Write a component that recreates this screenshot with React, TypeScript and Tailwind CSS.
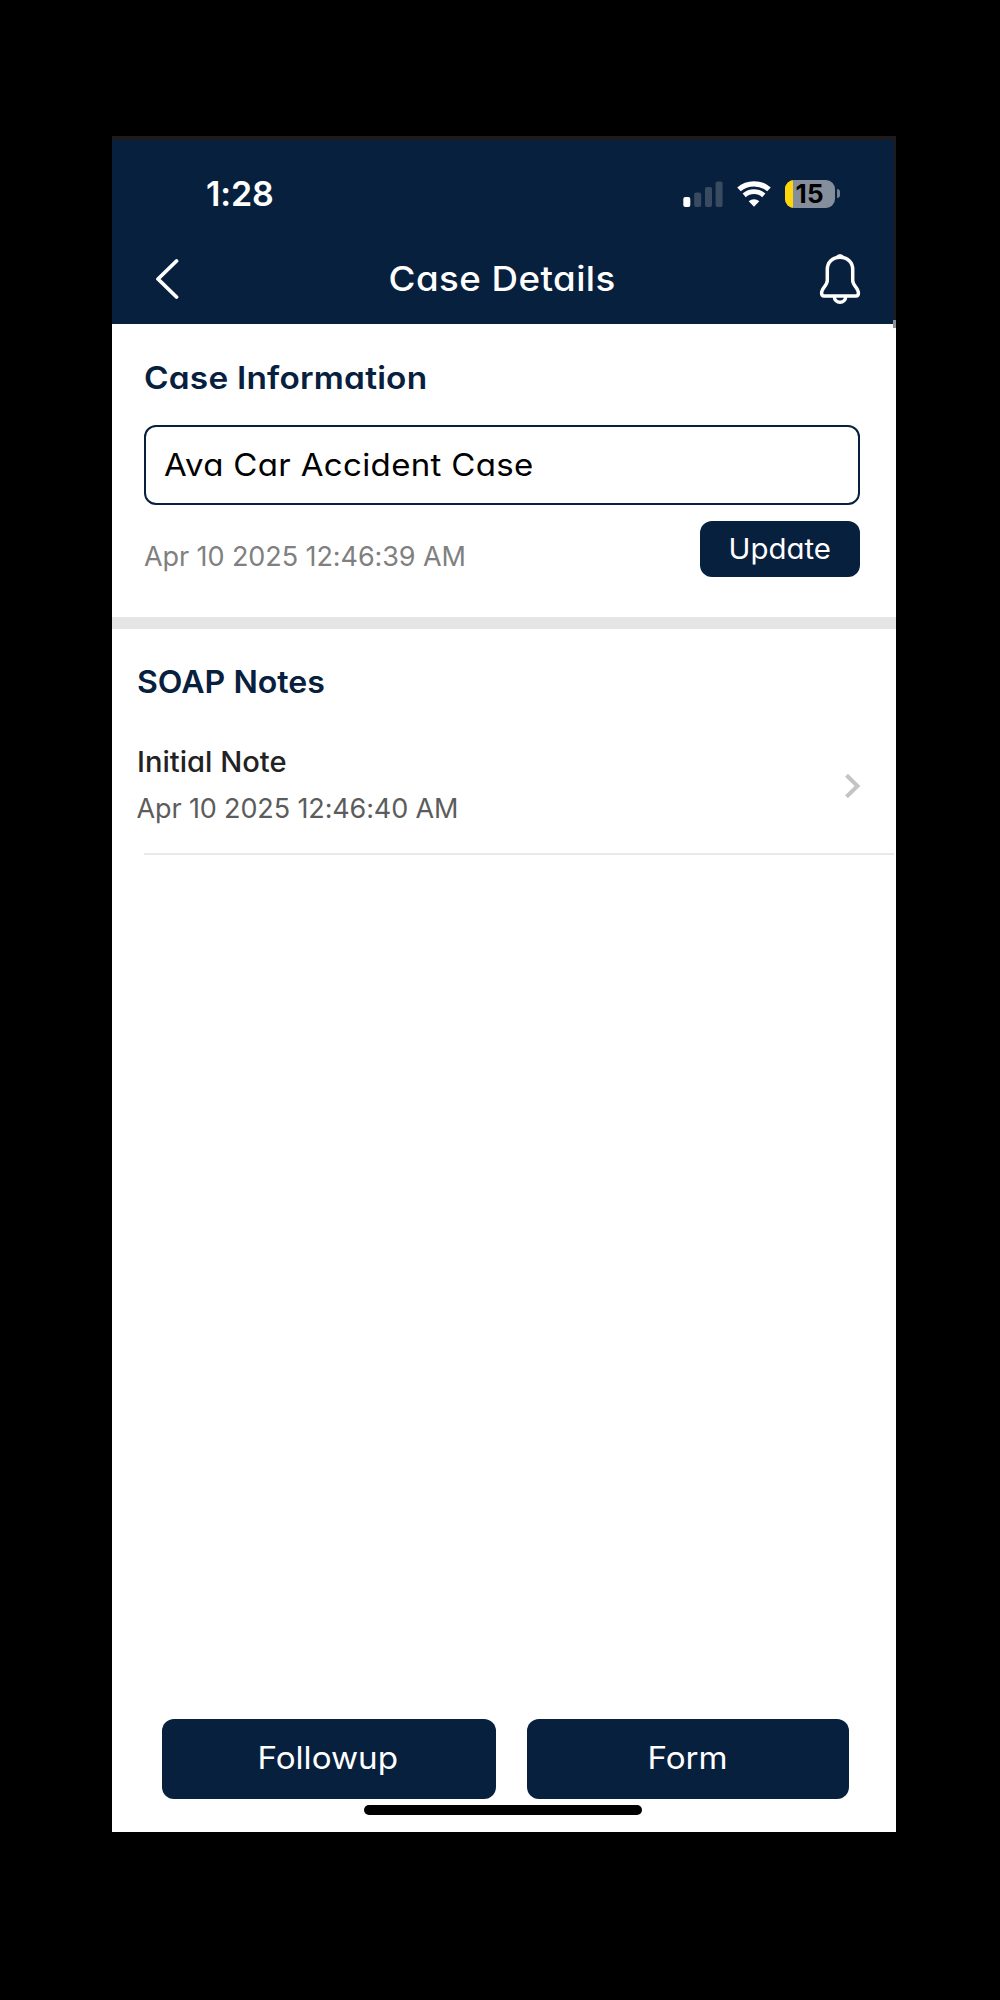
function SignalIcon() {
  return (
    <svg width="40" height="26" viewBox="0 0 40 26">
      <rect x="0.3" y="16" width="7" height="10" rx="2" fill="#fff" />
      <rect x="11.2" y="11.5" width="7" height="14.5" rx="2" fill="#394b61" />
      <rect x="22" y="6" width="7" height="20" rx="2" fill="#394b61" />
      <rect x="32.6" y="0.5" width="7" height="25.5" rx="2" fill="#394b61" />
    </svg>
  );
}

function WifiIcon() {
  return (
    <svg width="34" height="26" viewBox="0 0 34 26" fill="none" stroke="#fff">
      <path d="M2 8.4C10.3 0.9 23.7 0.9 32 8.4" strokeWidth="5.2" />
      <path d="M7.2 14.4c5.5-5 14.1-5 19.6 0" strokeWidth="4.8" />
      <path d="M17 25.7l-5.3-5.5c2.9-2.7 7.7-2.7 10.6 0z" fill="#fff" stroke="none" />
    </svg>
  );
}

function Battery() {
  return (
    <div className="flex items-center">
      <div className="flex h-7 w-[50px] items-center overflow-hidden rounded-[9px] bg-[#858f9c]">
        <div className="h-full w-2 shrink-0 bg-[#ffd60a]" />
        <span className="ml-[2.5px] text-[26px] leading-7 font-bold tracking-[0.3px] text-black">15</span>
      </div>
      <div className="ml-0.5 h-[9px] w-[3px] rounded-r-full bg-[#75818f]" />
    </div>
  );
}

function BackIcon() {
  return (
    <svg width="24" height="42" viewBox="0 0 24 42" fill="none" stroke="#fff" strokeWidth="3.8" strokeLinecap="round" strokeLinejoin="round">
      <path d="M21.5 3L3 21L21.5 39" />
    </svg>
  );
}

function BellIcon() {
  return (
    <svg width="42" height="52" viewBox="0 0 42 52" fill="none" stroke="#fff" strokeWidth="3.5" strokeLinejoin="round">
      <path d="M21 4.2C13.3 4.2 8.3 9.5 8.3 16.5V27.5c0 5-5.7 7.5-5.7 12.5 0 2 1 3 2.5 3h31.8c1.5 0 2.5-1 2.5-3 0-5-5.7-7.5-5.7-12.5V16.5C33.7 9.5 28.7 4.2 21 4.2z" />
      <path d="M17 4C17.5 0.3 24.5 0.3 25 4z" fill="#fff" stroke="none" />
      <path d="M15.3 43.5c0 7.6 11.4 7.6 11.4 0" />
    </svg>
  );
}

function ChevronIcon() {
  return (
    <svg width="16" height="26" viewBox="0 0 16 26" fill="none" stroke="#c4c4c4" strokeWidth="4">
      <path d="M1.5 2.2L12.5 13L1.5 23.8" />
    </svg>
  );
}

export default function App() {
  return (
    <div className="h-[2000px] w-[1000px] bg-black pt-[136px] pl-28 font-['Inter',sans-serif] [font-feature-settings:'cv11']">
      <div className="flex h-[1696px] w-[784px] flex-col bg-white">
        <header className="relative h-[188px] shrink-0 border-t-4 border-r-2 border-[#1f1a1c] bg-[#07203d] text-white">
          <div className="flex h-[107px] items-center justify-between pr-[54px] pl-[94px]">
            <span className="text-[34px] leading-10 font-semibold tracking-[-0.1px]">1:28</span>
            <div className="flex items-center">
              <SignalIcon />
              <div className="ml-[14px]"><WifiIcon /></div>
              <div className="ml-[14px]"><Battery /></div>
            </div>
          </div>
          <div className="flex h-[64px] items-center justify-between pr-[33px] pl-[43px]">
            <BackIcon />
            <h1 className="ml-[7px] scale-x-[1.08] text-[34px] leading-10 font-medium tracking-[0.4px]">Case Details</h1>
            <BellIcon />
          </div>
          <div className="absolute -right-0.5 -bottom-1 h-2 w-[3px] bg-[#8c9398]" />
        </header>

        <section className="px-8 pt-[34px]">
          <h2 className="origin-left scale-x-[1.077] text-[31px] leading-10 font-semibold tracking-[0.2px] text-[#07203d]">Case Information</h2>
          <div className="mt-[27px] flex h-20 w-[716px] items-center rounded-xl border-2 border-[#07203d] pl-[18px] text-black">
            <span className="origin-left scale-x-[1.065] text-[31px] tracking-[0.32px]">Ava Car Accident Case</span>
          </div>
          <div className="mt-4 flex h-14 w-[716px] justify-between">
            <span className="pt-4 text-[27px] leading-10 tracking-[-0.08px] text-[#808080]">Apr 10 2025 12:46:39 AM</span>
            <button className="h-14 w-40 rounded-xl bg-[#07203d] text-[28px] text-white">
              <span className="inline-block scale-x-[1.05]">Update</span>
            </button>
          </div>
        </section>
        <div className="mt-[40px] h-3 shrink-0 bg-[#e5e5e5]" />

        <section className="pt-[33px] pl-[24.5px]">
          <h2 className="origin-left scale-x-[1.035] text-[31px] leading-10 font-semibold text-[#07203d]">SOAP Notes</h2>
          <div className="mt-10 flex items-center justify-between pr-[35px]">
            <div>
              <p className="origin-left scale-x-[1.04] text-[28px] leading-10 font-medium text-[#222222]">Initial Note</p>
              <p className="mt-[7px] text-[27px] leading-10 tracking-[-0.13px] text-[#5c5c5c]">Apr 10 2025 12:46:40 AM</p>
            </div>
            <ChevronIcon />
          </div>
          <div className="mt-6 mr-[2px] ml-[7.5px] h-0.5 bg-[#e9e9e9]" />
        </section>

        <footer className="mt-auto">
          <div className="flex gap-[31px] pr-[47px] pl-[50px] text-[31px] text-white">
            <button className="h-20 w-[334px] rounded-xl bg-[#07203d] pr-[2px] pb-[2px]">
              <span className="inline-block scale-x-[1.07]">Followup</span>
            </button>
            <button className="h-20 flex-1 rounded-xl bg-[#07203d] pr-[2px] pb-[2px]">
              <span className="inline-block scale-x-[1.07]">Form</span>
            </button>
          </div>
          <div className="mt-[6px] mb-[17px] ml-[252px] h-[10px] w-[278px] rounded-full bg-black" />
        </footer>
      </div>
    </div>
  );
}
